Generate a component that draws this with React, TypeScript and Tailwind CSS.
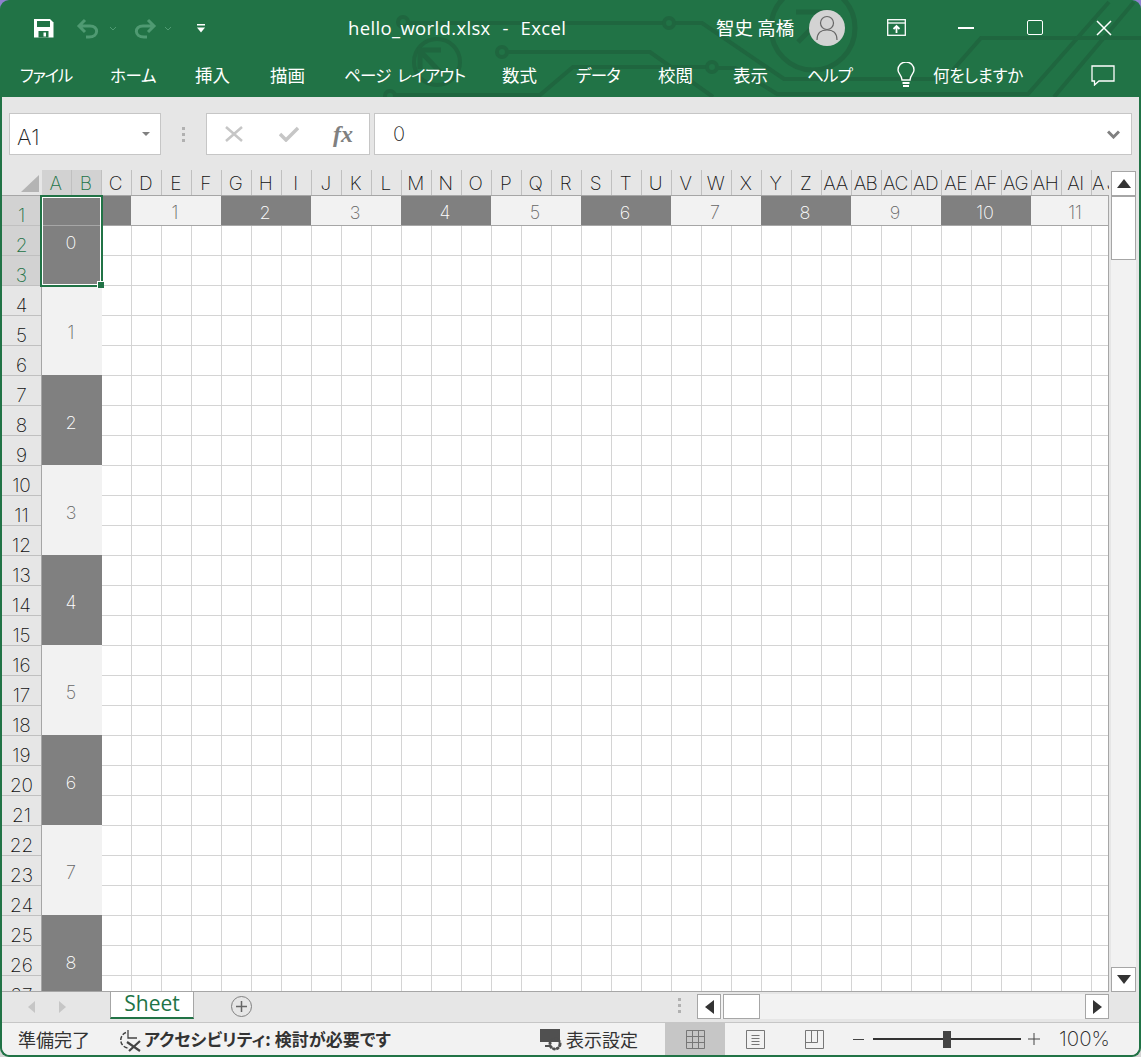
import React from "react";

const UI = "font-['Noto_Sans_CJK_JP',sans-serif] [font-feature-settings:'palt']";
const THIN = "font-['Inter',sans-serif] font-extralight";

const colNames = (() => {
  const a = "ABCDEFGHIJKLMNOPQRSTUVWXYZ".split("");
  return [...a, "AA", "AB", "AC", "AD", "AE", "AF", "AG", "AH", "AI", "AJ"];
})();

const menu: [string, number, string][] = [
  ["ファイル", 90, "text-[16.500px] tracking-[-1.300px]"],
  ["ホーム", 85, "text-[16.500px] tracking-[-0.300px]"],
  ["挿入", 75, "text-[17.500px]"],
  ["描画", 74, "text-[17.500px]"],
  ["ページ レイアウト", 158, "text-[16.500px] tracking-[-0.800px] [word-spacing:4px]"],
  ["数式", 74, "text-[17.500px]"],
  ["データ", 82, "text-[16.500px] tracking-[-0.700px]"],
  ["校閲", 75, "text-[17.500px]"],
  ["表示", 74, "text-[17.500px]"],
  ["ヘルプ", 83, "text-[16.500px] tracking-[-0.700px]"],
];

function CircuitPattern() {
  return (
    <svg className="absolute left-0 top-0" width="1141" height="97" viewBox="0 0 1141 97" fill="none" stroke="#1f663f" strokeWidth="4">
      <circle cx="403" cy="22" r="5" />
      <path d="M408 23H702L784 79H945L981 38H1141" />
      <circle cx="669" cy="23" r="5" fill="#217346" />
      <circle cx="502" cy="52" r="5" />
      <path d="M507 52H650L713 97" />
      <circle cx="390" cy="96" r="5" />
      <path d="M395 95H540L573 67H707" />
      <circle cx="712" cy="67" r="5" />
      <path d="M717 68H735L777 94H1028L1109 2M1054 97L1134 2" />
      <circle cx="437" cy="62" r="23" />
      <path d="M441 50H420V69M421 52L442 74" strokeWidth="5" />
      <circle cx="813" cy="28" r="42" strokeWidth="5" />
      <path d="M796 12H828V40M826 14L798 42" strokeWidth="5" />
    </svg>
  );
}

function Chevron({ className }: { className: string }) {
  return (
    <svg className={className} width="8" height="6" viewBox="0 0 8 6" fill="none" stroke="#4f9a72" strokeWidth="1">
      <path d="M1 1L4 4L7 1" />
    </svg>
  );
}

function TitleRow() {
  return (
    <div className="relative flex h-[55px] items-center">
      <svg className="ml-[34px]" width="20" height="20" viewBox="0 0 20 20">
        <path d="M0 1h16l3.500 3.500V19.500H0z" fill="#fff" />
        <rect x="3" y="3" width="13" height="6" fill="#217346" />
        <rect x="4.500" y="13" width="10" height="6.500" fill="#217346" />
        <rect x="9.500" y="14.500" width="2.500" height="4" fill="#fff" />
      </svg>
      <svg className="ml-[22px] mt-[2px]" width="23" height="21" viewBox="0 0 23 21" fill="none" stroke="#4f9a72" strokeWidth="3">
        <path d="M9 2L3 8L9 14M3 8H14C23 8 23 19 13 19H10" />
      </svg>
      <Chevron className="ml-[10px] mt-[3px]" />
      <svg className="ml-[17px] mt-[2px]" width="23" height="21" viewBox="0 0 23 21" fill="none" stroke="#4f9a72" strokeWidth="3">
        <path d="M14 2L20 8L14 14M20 8H9C0 8 0 19 10 19H13" />
      </svg>
      <Chevron className="ml-[7px] mt-[3px]" />
      <svg className="ml-[25px] mt-[1px]" width="8" height="9" viewBox="0 0 8 9" fill="#fff">
        <rect x="0" y="0" width="8" height="1.500" />
        <path d="M0 3.500H8L4 8.500z" />
      </svg>
      <div className="ml-[143px] w-[368px] whitespace-pre font-['Open_Sans',sans-serif] text-[18.500px] tracking-[0.350px] text-white [word-spacing:0.750px]">hello_world.xlsx  -  Excel</div>
      <div className={`${UI} w-[93px] whitespace-nowrap text-[18.500px] text-white`}>智史 高橋</div>
      <div className="flex h-[36px] w-[36px] items-center justify-center rounded-full bg-[#d3d3d3]">
        <svg width="22" height="26" viewBox="0 0 22 26" fill="none" stroke="#666" strokeWidth="1.200">
          <circle cx="11" cy="8" r="6.500" />
          <path d="M1 25C1 17 6 15 11 15S21 17 21 25" />
        </svg>
      </div>
      <svg className="ml-[42px]" width="19" height="17" viewBox="0 0 19 17" fill="none" stroke="#fff" strokeWidth="1.300">
        <rect x="0.700" y="0.700" width="17.600" height="15.600" />
        <path d="M1 4H18" />
        <path d="M9.500 14V7M6.500 10L9.500 7L12.500 10" strokeWidth="1.800" />
      </svg>
      <div className="ml-[52px] h-[2px] w-[16px] bg-white" />
      <div className="ml-[53px] h-[15px] w-[16px] rounded-[2px] border-[1.500px] border-white" />
      <svg className="ml-[53px]" width="16" height="16" viewBox="0 0 16 16" stroke="#fff" strokeWidth="1.500">
        <path d="M1 1L15 15M15 1L1 15" />
      </svg>
    </div>
  );
}

function MenuRow() {
  return (
    <div className="relative flex h-[42px] items-center pb-[2px] pl-[20px] text-white">
      {menu.map(([t, w, c]) => (
        <div key={t} className={`${UI} ${c} whitespace-nowrap`} style={{ width: w }}>
          {t}
        </div>
      ))}
      <svg className="ml-[6px]" width="20" height="26" viewBox="0 0 20 26" fill="none" stroke="#fff" strokeWidth="1.400">
        <path d="M6 18C6 13 2 12 2 8A8 8 0 0 1 18 8C18 12 14 13 14 18H6z" />
        <path d="M6.500 21H13.500M7 24H13" strokeWidth="2" />
      </svg>
      <div className={`${UI} ml-[17px] w-[158px] whitespace-nowrap text-[16.500px] tracking-[-0.300px]`}>何をしますか</div>
      <svg width="24" height="21" viewBox="0 0 24 21" fill="none" stroke="#fff" strokeWidth="1.300">
        <path d="M1 1H23V16H8L3.500 20V16H1z" />
      </svg>
    </div>
  );
}

function FormulaBar() {
  return (
    <div className="flex h-[73px] shrink-0 items-start pl-[7px] pr-[7px] pt-[16px]">
      <div className="flex h-[42px] w-[152px] items-center justify-between border border-[#c6c6c6] bg-white pl-[7px] pr-[10px]">
        <span className={`${THIN} mt-[6px] text-[22px] tracking-[0.500px] text-[#222]`}>A1</span>
        <svg width="8" height="4" viewBox="0 0 8 4" fill="#808080">
          <path d="M0 0H8L4 4z" />
        </svg>
      </div>
      <div className="flex h-[42px] w-[45px] flex-col items-center justify-center gap-[3px]">
        <div className="h-[3px] w-[3px] bg-[#b1b1b1]" />
        <div className="h-[3px] w-[3px] bg-[#b1b1b1]" />
        <div className="h-[3px] w-[3px] bg-[#b1b1b1]" />
      </div>
      <div className="flex h-[42px] w-[164px] items-center border border-[#c6c6c6] bg-white">
        <svg className="ml-[18px]" width="18" height="16" viewBox="0 0 18 16" stroke="#c6c6c6" strokeWidth="2.500" fill="none">
          <path d="M1 1L17 15M17 1L1 15" />
        </svg>
        <svg className="ml-[36px]" width="20" height="16" viewBox="0 0 20 16" stroke="#c6c6c6" strokeWidth="3.500" fill="none">
          <path d="M1 8L7 14L19 2" />
        </svg>
        <span className="ml-[34px] font-['Liberation_Serif',serif] text-[24px] font-bold italic leading-none text-[#808080]">
          fx
        </span>
      </div>
      <div className="ml-[4px] flex h-[42px] flex-1 items-center justify-between border border-[#c6c6c6] bg-white pl-[18px] pr-[11px]">
        <span className={`${THIN} text-[20px] text-[#222]`}>0</span>
        <svg width="13" height="9" viewBox="0 0 13 9" fill="none" stroke="#808080" strokeWidth="3">
          <path d="M1 1.500L6.500 7L12 1.500" />
        </svg>
      </div>
    </div>
  );
}

function ColHeader() {
  return (
    <div className="flex h-[26px] shrink-0 overflow-hidden border-b border-[#a6a6a6]">
      <div className="flex h-full w-[40px] shrink-0 items-end justify-end pb-[3px] pr-[3px]">
        <div className="h-0 w-0 border-b-[17px] border-l-[18px] border-b-[#b4b4b4] border-l-transparent" />
      </div>
      {colNames.map((c, i) => (
        <div
          key={c}
          className={`${THIN} flex h-full w-[30px] shrink-0 items-center justify-center overflow-hidden whitespace-nowrap border-r border-[#c0c0c0] pr-[2px] pt-[3px] text-[19px] ${
            c === "AJ" ? "tracking-[2px]" : "tracking-[-0.500px]"
          } ${i < 2 ? "bg-[#d2d2d2] text-[#217346]" : "text-[#111]"}`}
        >
          {c}
        </div>
      ))}
    </div>
  );
}

function RowHeader() {
  return (
    <div className="flex w-[40px] shrink-0 flex-col border-r border-[#a6a6a6]">
      {Array.from({ length: 27 }, (_, i) => (
        <div
          key={i}
          className={`${THIN} flex h-[30px] shrink-0 items-center justify-center border-b border-[#c0c0c0] pt-[10px] text-[19px] leading-none ${
            i < 3 ? "bg-[#d2d2d2] text-[#217346]" : "text-[#111]"
          }`}
        >
          {i + 1}
        </div>
      ))}
    </div>
  );
}

function Grid() {
  const bands = [0, 1, 2, 3, 4, 5, 6, 7, 8];
  const top = [1, 2, 3, 4, 5, 6, 7, 8, 9, 10, 11];
  return (
    <div className="flex w-[1067px] shrink-0 overflow-hidden border-r border-[#a6a6a6] bg-white">
      <div className="flex w-[60px] shrink-0 flex-col">
        {bands.map((b) => (
          <div
            key={b}
            className={`${THIN} relative flex ${b === 0 ? "h-[89px]" : "h-[90px]"} shrink-0 items-center justify-center pr-[2px] pt-[4px] text-[18px] ${
              b % 2 === 0 ? "bg-[#808080] text-white" : "bg-[#f2f2f2] text-[#666]"
            }`}
          >
            {b === 0 && <div className="absolute left-0 right-0 top-[29px] h-px bg-[#a6a6a6]" />}
            {b}
          </div>
        ))}
      </div>
      <div className="flex flex-col">
        <div className="flex h-[30px] shrink-0 border-b border-[#a6a6a6]">
          <div className="h-full w-[29px] shrink-0 bg-[#808080]" />
          {top.map((n) => (
            <div
              key={n}
              className={`${THIN} flex h-full w-[90px] shrink-0 items-center justify-center pr-[2px] pt-[3px] text-[18px] ${
                n % 2 === 0 ? "bg-[#808080] text-white" : "bg-[#f2f2f2] text-[#666]"
              }`}
            >
              {n}
            </div>
          ))}
        </div>
        <div className="grid grid-cols-[repeat(34,30px)] auto-rows-[30px]">
          {Array.from({ length: 884 }, (_, i) => (
            <div key={i} className="border-b border-r border-[#d4d4d4]" />
          ))}
        </div>
      </div>
    </div>
  );
}

function Triangle({ d, className }: { d: "up" | "down" | "left" | "right"; className?: string }) {
  const p = { up: "M0 9H14L7 0z", down: "M0 0H14L7 9z", left: "M9 0V14L0 7z", right: "M0 0V14L9 7z" }[d];
  const v = d === "up" || d === "down";
  return (
    <svg className={className} width={v ? 14 : 9} height={v ? 9 : 14} viewBox={v ? "0 0 14 9" : "0 0 9 14"} fill="#333">
      <path d={p} />
    </svg>
  );
}

function VScroll() {
  return (
    <div className="flex h-[822px] w-[30px] shrink-0 flex-col items-start pl-[2px] pt-px">
      <div className="flex h-[25px] w-[25px] shrink-0 items-center justify-center border border-[#a6a6a6] bg-white">
        <Triangle d="up" />
      </div>
      <div className="flex w-[25px] flex-1 flex-col bg-[#f2f2f2]">
        <div className="h-[64px] w-[25px] border border-[#a6a6a6] bg-white" />
      </div>
      <div className="flex h-[25px] w-[25px] shrink-0 items-center justify-center border border-[#a6a6a6] bg-white">
        <Triangle d="down" />
      </div>
    </div>
  );
}

function TabBar() {
  return (
    <div className="flex h-[31px] w-[1107px] shrink-0 border-b border-t border-b-transparent border-t-[#a6a6a6]">
      <div className="flex w-[108px] shrink-0 items-center gap-[24px] pl-[26px]">
        <svg width="7" height="12" viewBox="0 0 7 12" fill="#c6c6c6"><path d="M7 0V12L0 6z" /></svg>
        <svg width="7" height="12" viewBox="0 0 7 12" fill="#c6c6c6"><path d="M0 0V12L7 6z" /></svg>
      </div>
      <div className="flex h-[27px] w-[84px] shrink-0 items-center justify-center border-b-2 border-l border-r border-b-[#217346] border-l-[#a6a6a6] border-r-[#a6a6a6] bg-white pb-[1px] font-['Open_Sans',sans-serif] text-[21px] text-[#217346]">
        Sheet
      </div>
      <div className="ml-[37px] mt-[4px] flex h-[21px] w-[21px] shrink-0 items-center justify-center rounded-full border border-[#808080]">
        <svg width="11" height="11" viewBox="0 0 11 11" stroke="#666" strokeWidth="1.500"><path d="M5.500 0V11M0 5.500H11" /></svg>
      </div>
      <div className="ml-[418px] flex w-[18px] shrink-0 flex-col items-center gap-[3px] pt-[6px]">
        <div className="h-[3px] w-[3px] bg-[#b1b1b1]" />
        <div className="h-[3px] w-[3px] bg-[#b1b1b1]" />
        <div className="h-[3px] w-[3px] bg-[#b1b1b1]" />
      </div>
      <div className="ml-[9px] mt-[2px] flex h-[25px] flex-1 bg-[#f2f2f2]">
        <div className="flex h-full w-[24px] items-center justify-center border border-[#a6a6a6] bg-white">
          <Triangle d="left" />
        </div>
        <div className="ml-[2px] h-full w-[37px] border border-[#a6a6a6] bg-white" />
        <div className="flex-1" />
        <div className="flex h-full w-[24px] items-center justify-center border border-[#a6a6a6] bg-white">
          <Triangle d="right" />
        </div>
      </div>
    </div>
  );
}

function StatusBar() {
  return (
    <div className="flex h-[33px] shrink-0 items-center overflow-hidden rounded-b-[8px] border-t border-[#c6c6c6] bg-[#f2f2f2] text-[#333]">
      <span className={`${UI} ml-[16px] w-[100px] whitespace-nowrap text-[18px]`}>準備完了</span>
      <svg className="mt-[2px]" width="25" height="23" viewBox="0 0 25 23" fill="none" stroke="#444" strokeWidth="1.500">
        <path d="M8 3.500A8 8 0 0 0 11 19" strokeDasharray="4 1.500" />
        <path d="M10 1V9H19" strokeWidth="1.300" />
        <path d="M9 13L22 22M22 12L11 22" strokeWidth="2.200" />
      </svg>
      <span className={`${UI} ml-[1px] w-[395px] whitespace-nowrap text-[17px] font-bold tracking-[0.050px]`}>アクセシビリティ: 検討が必要です</span>
      <svg width="24" height="23" viewBox="0 0 24 23">
        <path d="M1 1H21V14H1z" fill="#505050" />
        <path d="M6 18H12" stroke="#505050" strokeWidth="2" />
        <circle cx="16" cy="16" r="5" fill="none" stroke="#505050" strokeWidth="3" strokeDasharray="2.500 1.200" />
        <circle cx="16" cy="16" r="5" fill="none" stroke="#505050" strokeWidth="1.500" />
      </svg>
      <span className={`${UI} ml-[3px] w-[99px] whitespace-nowrap text-[18px]`}>表示設定</span>
      <div className="flex h-full w-[60px] shrink-0 items-center justify-center bg-[#c6c6c6]">
        <svg width="19" height="19" viewBox="0 0 19 19" fill="none" stroke="#777" strokeWidth="1">
          <path d="M.500.500H18.500V18.500H.500zM.500 6.500H18.500M.500 12.500H18.500M6.500.500V18.500M12.500.500V18.500" />
        </svg>
      </div>
      <div className="flex h-full w-[60px] shrink-0 items-center justify-center">
        <svg width="19" height="19" viewBox="0 0 19 19" fill="none" stroke="#777" strokeWidth="1">
          <path d="M.500.500H18.500V18.500H.500zM5.500 5.500H13.500M5.500 8.500H13.500M5.500 11.500H13.500M5.500 14.500H13.500" />
        </svg>
      </div>
      <div className="flex h-full w-[58px] shrink-0 items-center justify-center">
        <svg width="19" height="19" viewBox="0 0 19 19" fill="none" stroke="#777" strokeWidth="1">
          <path d="M.500.500H18.500V18.500H.500zM.500 12.500H12.500V.500M6.500.500V12.500" />
        </svg>
      </div>
      <div className="ml-[10px] h-px w-[11px] bg-[#444]" />
      <div className="relative ml-[9px] flex h-full w-[148px] shrink-0 items-center">
        <div className="h-[2px] w-full bg-[#333]" />
        <div className="absolute left-[70px] top-[8px] h-[17px] w-[8px] bg-[#444]" />
      </div>
      <svg className="ml-[7px]" width="12" height="12" viewBox="0 0 12 12" stroke="#444" strokeWidth="1">
        <path d="M6 0V12M0 6H12" />
      </svg>
      <span className={`${THIN} ml-[19px] whitespace-nowrap text-[20.500px] text-[#222]`}>100%</span>
    </div>
  );
}

export default function App() {
  return (
    <div className="h-[1057px] w-[1141px] overflow-hidden bg-[linear-gradient(#8f82cf_50%,#d4d4d4_50%)]">
      <div className="relative flex h-full w-full flex-col overflow-hidden rounded-[9px] bg-[#217346]">
        <CircuitPattern />
        <TitleRow />
        <MenuRow />
        <div className="relative mx-[2px] mb-[2px] flex min-h-0 flex-1 flex-col rounded-b-[8px] bg-[#e6e6e6]">
          <FormulaBar />
          <div className="relative flex h-[821px] shrink-0">
            <div className="flex w-[1107px] shrink-0 flex-col">
              <ColHeader />
              <div className="flex h-[795px] shrink-0 overflow-hidden">
                <RowHeader />
                <Grid />
              </div>
            </div>
            <VScroll />
            <div className="absolute left-[38px] top-[25px] h-[92px] w-[63px] border-2 border-[#217346]">
              <div className="h-full w-full border border-white" />
              <div className="absolute -bottom-[3px] -right-[3px] h-[7px] w-[7px] border-l border-t border-white bg-[#217346]" />
            </div>
          </div>
          <TabBar />
          <StatusBar />
        </div>
      </div>
    </div>
  );
}
